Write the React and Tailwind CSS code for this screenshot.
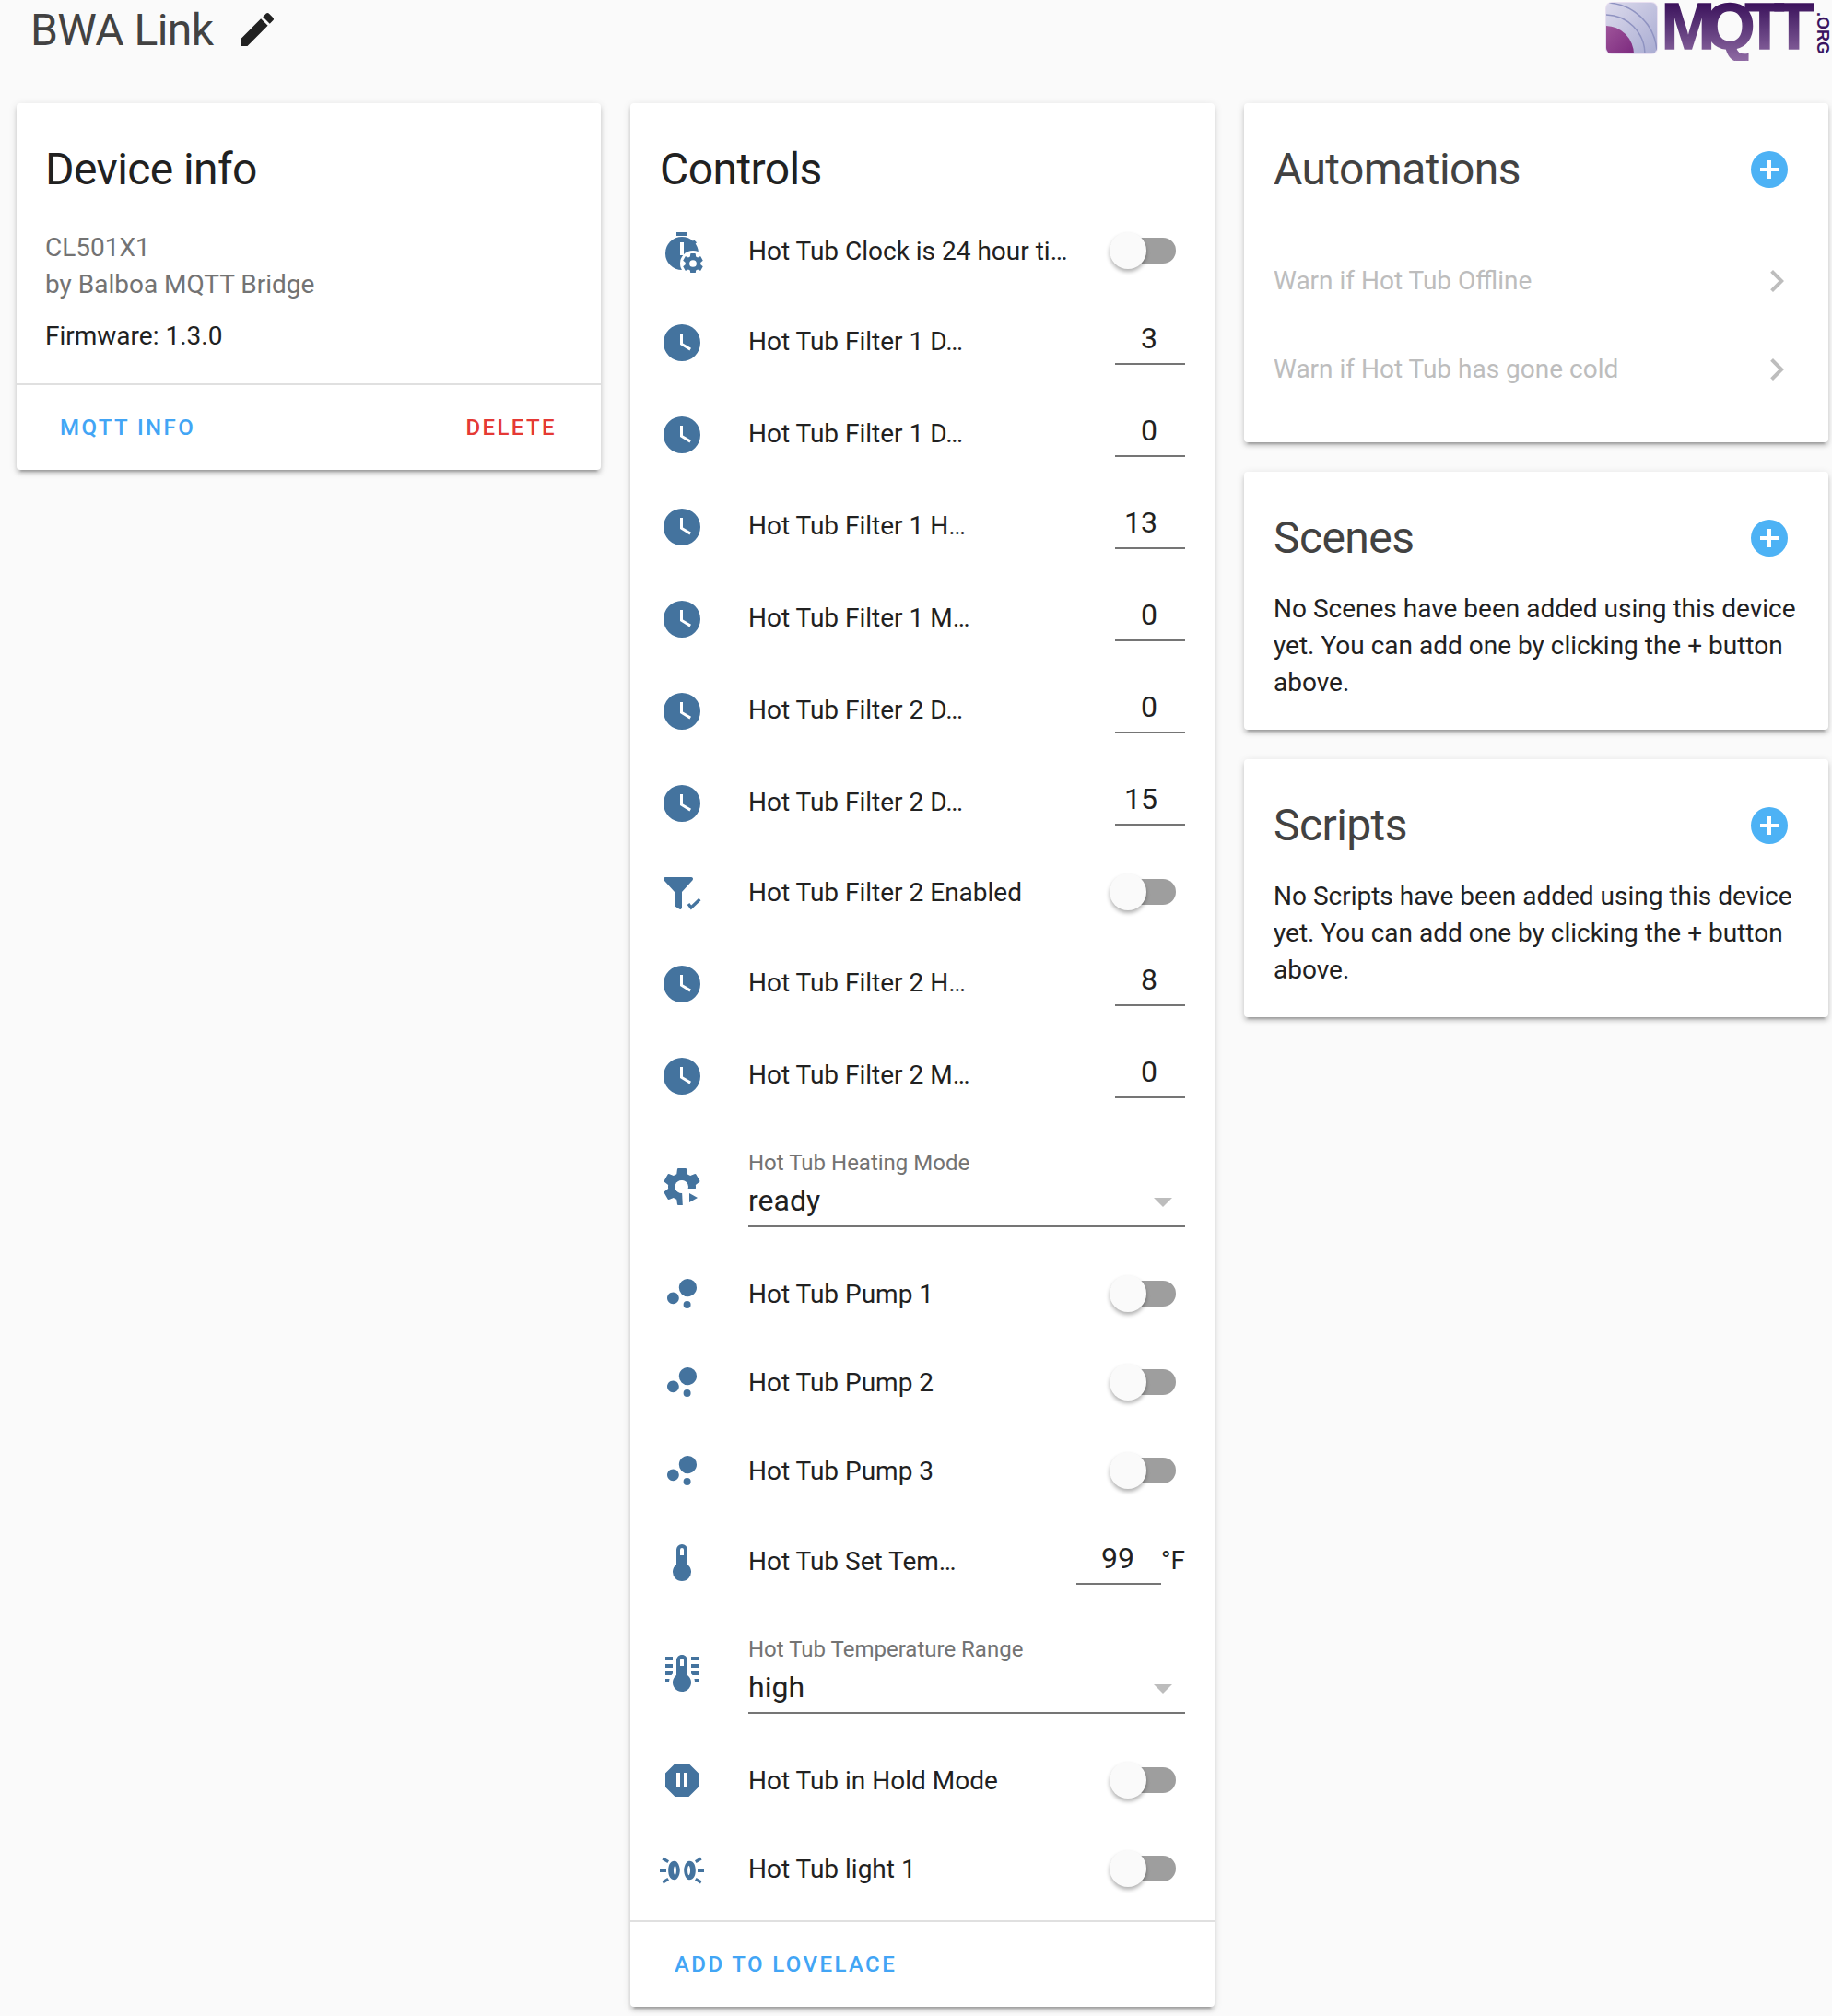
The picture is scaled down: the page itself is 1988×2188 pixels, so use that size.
import React from 'react';

const CLOCK = 'M12,2A10,10 0 0,0 2,12A10,10 0 0,0 12,22A10,10 0 0,0 22,12A10,10 0 0,0 12,2M16.2,16.2L11,13V7H12.5V12.2L17,14.9L16.2,16.2Z';
const COG = 'M12,15.5A3.5,3.5 0 0,1 8.5,12A3.5,3.5 0 0,1 12,8.5A3.5,3.5 0 0,1 15.5,12A3.5,3.5 0 0,1 12,15.5M19.43,12.97C19.47,12.65 19.5,12.33 19.5,12C19.5,11.67 19.47,11.34 19.43,11L21.54,9.37C21.73,9.22 21.78,8.95 21.66,8.73L19.66,5.27C19.54,5.05 19.27,4.96 19.05,5.05L16.56,6.05C16.04,5.66 15.5,5.32 14.87,5.07L14.5,2.42C14.46,2.18 14.25,2 14,2H10C9.75,2 9.54,2.18 9.5,2.42L9.13,5.07C8.5,5.32 7.96,5.66 7.44,6.05L4.95,5.05C4.73,4.96 4.46,5.05 4.34,5.27L2.34,8.73C2.21,8.95 2.27,9.22 2.46,9.37L4.57,11C4.53,11.34 4.5,11.67 4.5,12C4.5,12.33 4.53,12.65 4.57,12.97L2.46,14.63C2.27,14.78 2.21,15.05 2.34,15.27L4.34,18.73C4.46,18.95 4.73,19.03 4.95,18.95L7.44,17.94C7.96,18.34 8.5,18.68 9.13,18.93L9.5,21.58C9.54,21.82 9.75,22 10,22H14C14.25,22 14.46,21.82 14.5,21.58L14.87,18.93C15.5,18.67 16.04,18.34 16.56,17.94L19.05,18.95C19.27,19.03 19.54,18.95 19.66,18.73L21.66,15.27C21.78,15.05 21.73,14.78 21.54,14.63L19.43,12.97Z';
const BUBBLES = 'M7.2,11.2C8.97,11.2 10.4,12.63 10.4,14.4C10.4,16.17 8.97,17.6 7.2,17.6C5.43,17.6 4,16.17 4,14.4C4,12.63 5.43,11.2 7.2,11.2M14.8,16A2,2 0 0,1 16.8,18A2,2 0 0,1 14.8,20A2,2 0 0,1 12.8,18A2,2 0 0,1 14.8,16M15.2,4A4.8,4.8 0 0,1 20,8.8C20,11.45 17.85,13.6 15.2,13.6A4.8,4.8 0 0,1 10.4,8.8C10.4,6.15 12.55,4 15.2,4Z';
const THERMO = 'M15 13V5A3 3 0 0 0 9 5V13A5 5 0 1 0 15 13M12 4A1 1 0 0 1 13 5V8H11V5A1 1 0 0 1 12 4Z';
const THERMO_LINES = 'M17 3H21V5H17V3M17 7H21V9H17V7M17 11H21V13H17.75L17 12.1V11M21 15V17H19C19 16.31 18.9 15.63 18.71 15H21M7 3V5H3V3H7M7 7V9H3V7H7M7 11V12.1L6.25 13H3V11H7M3 15H5.29C5.1 15.63 5 16.31 5 17H3V15M15 13V5C15 3.34 13.66 2 12 2S9 3.34 9 5V13C6.79 14.66 6.34 17.79 8 20S12.79 22.66 15 21 17.66 16.21 16 14C15.72 13.62 15.38 13.28 15 13M12 4C12.55 4 13 4.45 13 5V8H11V5C11 4.45 11.45 4 12 4Z';
const PAUSE = 'M15.73,3L21,8.27V15.73L15.73,21H8.27L3,15.73V8.27L8.27,3H15.73M11,8H9V16H11V8M15,8H13V16H15V8Z';
const PENCIL = 'M20.71,7.04C21.1,6.65 21.1,6 20.71,5.63L18.37,3.29C18,2.9 17.35,2.9 16.96,3.29L15.12,5.12L18.87,8.87M3,17.25V21H6.75L17.81,9.93L14.06,6.18L3,17.25Z';
const PLUS = 'M17,13H13V17H11V13H7V11H11V7H13V11H17M12,2A10,10 0 0,0 2,12A10,10 0 0,0 12,22A10,10 0 0,0 22,12A10,10 0 0,0 12,2Z';
const CHEVRON = 'M8.59,16.58L13.17,12L8.59,7.41L10,6L16,12L10,18L8.59,16.58Z';

const Mdi = ({ d, className = 'text-[#44739e]' }) => (
  <svg viewBox="0 0 24 24" className={`w-12 h-12 shrink-0 ${className}`} fill="currentColor">
    <path d={d} />
  </svg>
);

const TimerCog = () => (
  <svg viewBox="0 0 24 24" className="w-12 h-12 shrink-0 text-[#44739e]" fill="currentColor">
    <rect x="9" y="2" width="6" height="2" />
    <circle cx="12" cy="13.5" r="9" />
    <path d="M18.6,6.2 L20,7.6 L18.4,9.2 L17,7.8Z" />
    <rect x="11" y="7.5" width="2" height="7" fill="#fff" />
    <circle cx="18" cy="19" r="7" fill="#fff" />
    <g transform="translate(11.4 12.4) scale(0.55)">
      <path d={COG} />
    </g>
  </svg>
);

const FilterCheck = () => (
  <svg viewBox="0 0 24 24" className="w-12 h-12 shrink-0 text-[#44739e]" fill="currentColor">
    <path d="M3,4H17A1,1 0 0 1 17.8,5.6L12,12V20.5A1,1 0 0 1 10.5,21.3L8.6,20A1.5,1.5 0 0 1 8,19V12L2.2,5.6A1,1 0 0 1 3,4Z" />
    <path d="M15.5,18.5L17,20.5L21.7,16" fill="none" stroke="currentColor" strokeWidth="1.6" />
  </svg>
);

const CogPlay = () => (
  <svg viewBox="0 0 24 24" className="w-12 h-12 shrink-0 text-[#44739e]" fill="currentColor">
    <path d={COG} />
    <circle cx="11.6" cy="12" r="3.4" fill="#fff" />
    <polygon points="12,14 15,13 24,13 24,24 12.5,24" fill="#fff" />
    <polygon points="16,15.5 20.5,18 16,20.5" />
  </svg>
);

const Headlights = () => {
  const half = (
    <>
      <rect x="0" y="12" width="3.5" height="2" />
      <path d="M2,5.8L5,7.6L4.2,9L1.2,7.2Z" />
      <path d="M2,20.2L5,18.4L4.2,17L1.2,18.8Z" />
      <path
        fillRule="evenodd"
        d="M8,7.9C5.2,7.9 4.6,11 4.6,13C4.6,15 5.2,18.1 8,18.1C9.8,18.1 10.9,15 10.9,13C10.9,11 9.8,7.9 8,7.9ZM8.3,10.4C7.2,11 7.2,15 8.3,15.6C9.2,15 9.2,11 8.3,10.4Z"
      />
    </>
  );
  return (
    <svg viewBox="0 0 24 24" className="w-12 h-12 shrink-0 text-[#44739e]" fill="currentColor">
      {half}
      <g transform="translate(24 0) scale(-1 1)">{half}</g>
    </svg>
  );
};

const MqttLogo = () => (
  <div className="flex items-start pt-[2px] pr-[2px]">
    <svg viewBox="0 0 57 57" className="w-[57px] h-[57px] shrink-0 mr-1">
      <defs>
        <linearGradient id="tile" x1="0" y1="0" x2="1" y2="1">
          <stop offset="0" stopColor="#dcdaec" />
          <stop offset="1" stopColor="#a9acd2" />
        </linearGradient>
        <linearGradient id="core" x1="0" y1="0" x2="1" y2="1">
          <stop offset="0" stopColor="#b06aa8" />
          <stop offset="1" stopColor="#6a1470" />
        </linearGradient>
        <clipPath id="tileClip">
          <rect x="1" y="1" width="55" height="55" rx="6" />
        </clipPath>
      </defs>
      <rect x="0" y="0" width="57" height="57" rx="7" fill="#e8dff0" />
      <g clipPath="url(#tileClip)">
        <rect x="1" y="1" width="55" height="55" fill="url(#tile)" />
        <circle cx="0" cy="57" r="43" fill="none" stroke="#8f93c1" strokeWidth="1.5" />
        <circle cx="0" cy="57" r="56" fill="none" stroke="#8f93c1" strokeWidth="1.5" />
        <circle cx="0" cy="57" r="31" fill="url(#core)" />
      </g>
    </svg>
    <span className="font-['Liberation_Sans',sans-serif] font-bold text-[70px] leading-[54px] tracking-[-11px] bg-gradient-to-b from-[#3a0e5a] to-[#8f6aa3] bg-clip-text text-transparent pr-[11px] pb-[10px] [-webkit-text-stroke:1.5px_transparent]">
      MQTT
    </span>
    <span className="font-['Liberation_Sans',sans-serif] font-bold text-[18px] leading-[16px] text-[#3a1560] [writing-mode:vertical-rl] mt-[11px] ml-[2px]">
      .ORG
    </span>
  </div>
);

const Toggle = () => (
  <div className="relative w-[72px] h-7 rounded-[14px] bg-[#9e9e9e] shrink-0 mr-[10px]">
    <div className="absolute left-0 -top-[6px] w-10 h-10 rounded-full bg-[#fafafa] shadow-[0_3px_4px_rgba(0,0,0,0.3)]" />
  </div>
);

const NumberInput = ({ value }) => (
  <div className="w-[76px] h-12 border-b-2 border-[#757575] text-[32px] leading-[38px] text-right pr-[30px] text-[#212121] shrink-0">
    {value}
  </div>
);

const Row = ({ icon, children, mt = 'mt-4', h = 'h-20' }) => (
  <div className={`flex items-center ${h} ${mt}`}>
    {icon}
    <div className="flex-1 flex items-center justify-between ml-[48px] min-w-0">{children}</div>
  </div>
);

const ToggleRow = ({ icon, name, mt }) => (
  <Row icon={icon} mt={mt}>
    <span className="text-[28px] text-[#212121] mt-[2px]">{name}</span>
    <Toggle />
  </Row>
);

const InputRow = ({ name, value, mt }) => (
  <Row icon={<Mdi d={CLOCK} />} mt={mt} h="h-[84px]">
    <span className="text-[28px] text-[#212121] -mt-[2px]">{name}</span>
    <NumberInput value={value} />
  </Row>
);

const SelectRow = ({ icon, label, value, mt }) => (
  <Row icon={icon} mt={mt} h="h-[120px]">
    <div className="relative flex-1 border-b-2 border-[#757575] pb-[6px] mt-[3px]">
      <div className="text-[24px] leading-[30px] text-[#737373]">{label}</div>
      <div className="text-[32px] leading-[42px] text-[#212121] mt-[5px]">{value}</div>
      <div className="absolute right-[14px] top-[53px] w-0 h-0 border-l-[10px] border-r-[10px] border-t-[10px] border-l-transparent border-r-transparent border-t-[#bdbdbd]" />
    </div>
  </Row>
);

const Card = ({ children, className = '' }) => (
  <div className={`bg-white rounded-[4px] shadow-[0_4px_4px_0_rgba(0,0,0,0.14),0_2px_10px_0_rgba(0,0,0,0.12),0_6px_2px_-4px_rgba(0,0,0,0.2)] ${className}`}>
    {children}
  </div>
);

const CardAction = ({ children, color = 'text-[#42a5f5]' }) => (
  <span className={`text-[24px] font-medium tracking-[2.4px] uppercase ${color}`}>{children}</span>
);

const CardTitle = ({ children, className = 'text-[#212121]' }) => (
  <h2 className={`text-[48px] leading-16 tracking-[-0.58px] ${className}`}>{children}</h2>
);

const SideHeader = ({ title }) => (
  <div className="flex items-center justify-between pt-[40px] pl-8 pr-[40px]">
    <CardTitle className="text-[#424242]">{title}</CardTitle>
    <Mdi d={PLUS} className="text-[#4db2f5]" />
  </div>
);

const EmptyNote = ({ lines }) => (
  <p className="mt-[25px] px-8 pb-[31px] text-[28px] leading-10 text-[#212121]">{lines}</p>
);

const AutomationRow = ({ name }) => (
  <div className="flex items-center justify-between h-24">
    <span className="text-[28px] text-[#bdbdbd]">{name}</span>
    <Mdi d={CHEVRON} className="text-[#bdbdbd]" />
  </div>
);

export default function App() {
  return (
    <div className="w-[1988px] min-h-[2188px] bg-[#fafafa] overflow-hidden font-['Roboto',sans-serif]">
      <header className="flex justify-between h-[112px]">
        <div className="flex items-start pl-[33px]">
          <h1 className="text-[48px] leading-[66px] tracking-[-0.58px] text-[#424242]">BWA Link</h1>
          <Mdi d={PENCIL} className="text-[#212121] ml-[24px] mt-[8px]" />
        </div>
        <MqttLogo />
      </header>

      <div className="grid grid-cols-[634px_634px_634px] gap-8 pl-[18px] items-start">
        <Card>
          <div className="pt-[40px] pl-[31px] h-[304px]">
            <CardTitle>Device info</CardTitle>
            <div className="mt-[33px] text-[28px] leading-10 text-[#737373]">
              <div>CL501X1</div>
              <div>by Balboa MQTT Bridge</div>
            </div>
            <div className="mt-[16px] text-[28px] leading-10 text-[#212121]">Firmware: 1.3.0</div>
          </div>
          <div className="flex items-center justify-between h-[94px] border-t-2 border-[#e0e0e0] pl-[47px] pr-[48px]">
            <CardAction>MQTT Info</CardAction>
            <CardAction color="text-[#e53935]">Delete</CardAction>
          </div>
        </Card>

        <Card>
          <div className="pt-[40px] px-8 pb-4">
            <CardTitle className="text-[#212121] mb-[16px]">Controls</CardTitle>
            <ToggleRow icon={<TimerCog />} name="Hot Tub Clock is 24 hour ti…" mt="mt-0" />
            <InputRow name="Hot Tub Filter 1 D…" value="3" mt="mt-[18px]" />
            <InputRow name="Hot Tub Filter 1 D…" value="0" />
            <InputRow name="Hot Tub Filter 1 H…" value="13" />
            <InputRow name="Hot Tub Filter 1 M…" value="0" />
            <InputRow name="Hot Tub Filter 2 D…" value="0" />
            <InputRow name="Hot Tub Filter 2 D…" value="15" />
            <ToggleRow icon={<FilterCheck />} name="Hot Tub Filter 2 Enabled" mt="mt-[14px]" />
            <InputRow name="Hot Tub Filter 2 H…" value="8" mt="mt-[18px]" />
            <InputRow name="Hot Tub Filter 2 M…" value="0" />
            <SelectRow icon={<CogPlay />} label="Hot Tub Heating Mode" value="ready" mt="mt-[18px]" />
            <ToggleRow icon={<Mdi d={BUBBLES} />} name="Hot Tub Pump 1" />
            <ToggleRow icon={<Mdi d={BUBBLES} />} name="Hot Tub Pump 2" />
            <ToggleRow icon={<Mdi d={BUBBLES} />} name="Hot Tub Pump 3" />
            <Row icon={<Mdi d={THERMO} />} h="h-[84px]" mt="mt-[18px]">
              <span className="text-[28px] text-[#212121] -mt-[2px]">Hot Tub Set Tem…</span>
              <div className="flex items-start shrink-0">
                <div className="w-[92px] h-12 border-b-2 border-[#757575] text-[32px] leading-[38px] text-right pr-[29px] text-[#212121]">
                  99
                </div>
                <span className="text-[28px] leading-[44px] text-[#212121]">°F</span>
              </div>
            </Row>
            <SelectRow icon={<Mdi d={THERMO_LINES} />} label="Hot Tub Temperature Range" value="high" mt="mt-[18px]" />
            <ToggleRow icon={<Mdi d={PAUSE} />} name="Hot Tub in Hold Mode" />
            <ToggleRow icon={<Headlights />} name="Hot Tub light 1" />
          </div>
          <div className="flex items-center h-[94px] border-t-2 border-[#e0e0e0] pl-12">
            <CardAction>Add to Lovelace</CardAction>
          </div>
        </Card>

        <div className="flex flex-col gap-8">
          <Card>
            <SideHeader title="Automations" />
            <div className="mt-[41px] pb-[31px] pl-8 pr-8">
              <AutomationRow name="Warn if Hot Tub Offline" />
              <AutomationRow name="Warn if Hot Tub has gone cold" />
            </div>
          </Card>
          <Card>
            <SideHeader title="Scenes" />
            <EmptyNote lines="No Scenes have been added using this device yet. You can add one by clicking the + button above." />
          </Card>
          <Card>
            <SideHeader title="Scripts" />
            <EmptyNote lines="No Scripts have been added using this device yet. You can add one by clicking the + button above." />
          </Card>
        </div>
      </div>
    </div>
  );
}
